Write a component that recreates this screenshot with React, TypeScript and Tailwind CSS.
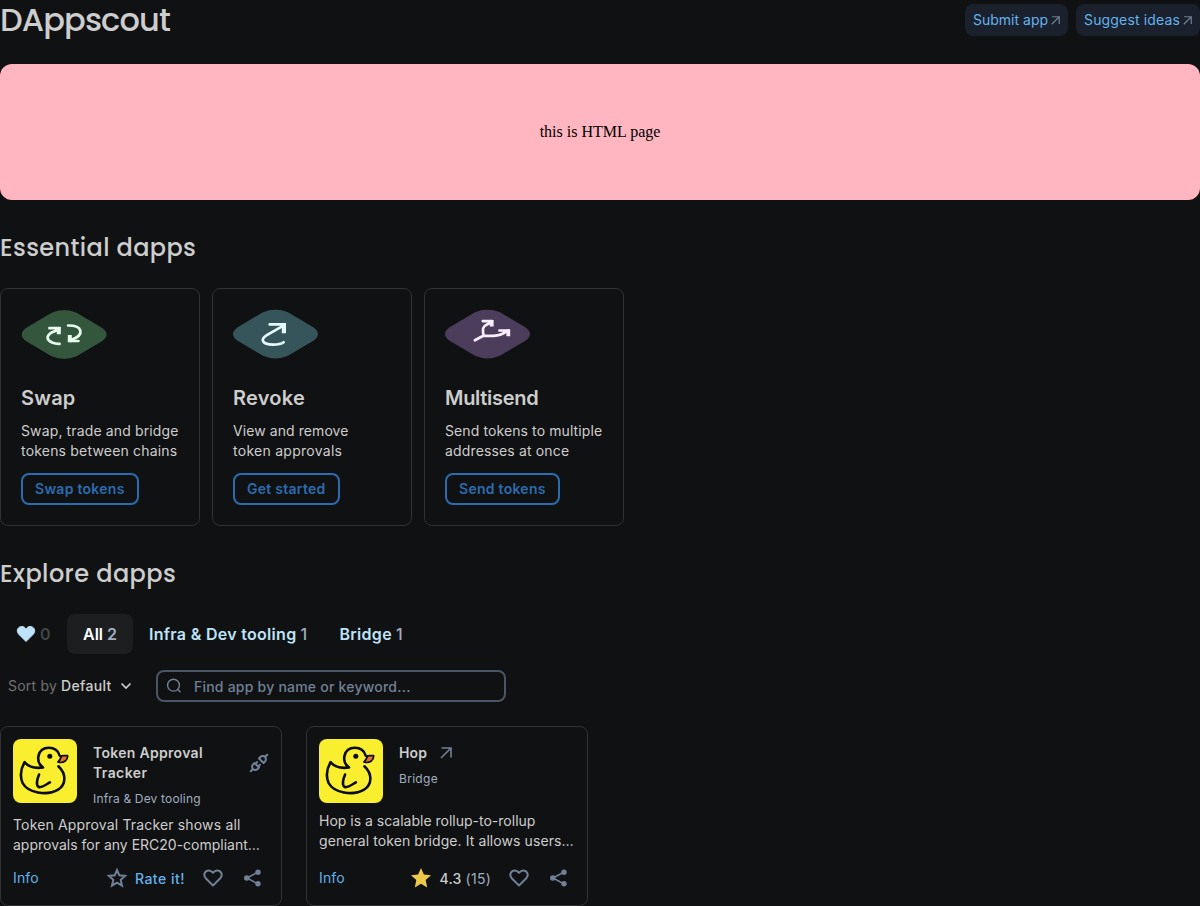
import React from "react";

const heading = "font-[Poppins,Lato,sans-serif] font-medium text-[#cdcdcd]";

type Line = [text: string, tracking: string];

function Lines({ lines }: { lines: Line[] }) {
  return (
    <>
      {lines.map(([text, tracking]) => (
        <span key={text} className={"block whitespace-nowrap " + tracking}>{text}</span>
      ))}
    </>
  );
}

function Arrow({ size, className = "" }: { size: number; className?: string }) {
  return (
    <svg width={size} height={size} viewBox="0 0 12 12" fill="none" stroke="#718096" strokeWidth="1.6" className={"shrink-0 " + className}>
      <path d="M1.500 1H11V10.500M11 1L1 11" />
    </svg>
  );
}

function Badge({ fill, stroke, className = "", children }: { fill: string; stroke: string; className?: string; children: React.ReactNode }) {
  return (
    <svg width="86" height="50" viewBox="0 0 86 50" fill="none" className={"block " + className}>
      <path d="M4.300 18L30 2.700Q42.500 -2.700 55 2.700L80.700 18Q89.300 24.500 80.700 31L55 46.300Q42.500 51.700 30 46.300L4.300 31Q-4.300 24.500 4.300 18Z" fill={fill} />
      <g stroke={stroke} strokeWidth="2.700" strokeLinecap="round" strokeLinejoin="round">{children}</g>
    </svg>
  );
}

const essentials: { title: Line; lines: Line[]; action: string; icon: React.ReactNode }[] = [
  {
    title: ["Swap", "tracking-[0.2px]"],
    lines: [["Swap, trade and bridge", "tracking-[0.13px]"], ["tokens between chains", "tracking-[0.19px]"]],
    action: "Swap tokens",
    icon: (
      <Badge fill="#33563c" stroke="#e9fdee" className="translate-x-[0.6px] translate-y-px">
        <path d="M27.800 18.200H38M37 19.500L33 21.200C27 23 24.500 27 27 30.200C29.300 33 34 33.900 38 33.800" />
        <path strokeWidth="4" strokeLinecap="butt" d="M37.200 17V24.200" />
        <path d="M46.500 15.500C52 15.400 57.500 16.700 58.700 20.500C59.800 24.700 55 28 49 30M48.500 31H56.800" />
        <path strokeWidth="4" strokeLinecap="butt" d="M48.200 25V32.300" />
      </Badge>
    ),
  },
  {
    title: ["Revoke", "tracking-[0.25px]"],
    lines: [["View and remove", "tracking-[0.08px]"], ["token approvals", "tracking-[0.27px]"]],
    action: "Get started",
    icon: (
      <Badge fill="#36555b" stroke="#e6fbff" className="translate-y-[0.5px]">
        <path d="M36.700 14.900H51M50 16.300L33.800 25.600C26.500 30 29.500 35.100 40 35.100C45 35.100 48.500 34.300 50.600 32.700" />
        <path strokeWidth="4.200" strokeLinecap="butt" d="M50.900 13.600V23.800" />
      </Badge>
    ),
  },
  {
    title: ["Multisend", "tracking-[-0.3px]"],
    lines: [["Send tokens to multiple", "tracking-[0.1px]"], ["addresses at once", "tracking-[0.15px]"]],
    action: "Send tokens",
    icon: (
      <Badge fill="#4d3d5c" stroke="#f7eeff" className="translate-y-[0.5px]">
        <path d="M29.900 30.800L38.300 26.300C46 26.500 52 27.200 57.500 24.300L63 21.400M54.400 21H63.500M38.500 26.200C37.700 20 37 17.200 42 14.900L46.800 12.600M37.800 11.600H47" />
        <path strokeWidth="3.800" strokeLinecap="butt" d="M63.300 19.800V26.700M46.700 10.400V17" />
      </Badge>
    ),
  },
];

function Duck() {
  return (
    <svg width="64" height="64" viewBox="0 0 64 64" className="shrink-0 rounded-lg bg-[#f9ef2e]">
      <g transform="translate(0.600 0)" fill="none" stroke="#0b0b08" strokeWidth="2.600" strokeLinecap="round" strokeLinejoin="round">
        <path d="M44.800 27.300C53 35 52.500 45.500 44.500 50.700C33 57.500 14 53.500 9 44C6.500 38 7 30 11 23.200C15 28 22 29.500 29.500 28.500C21.500 23 23.500 9 35.300 8.800C41 8.800 44.500 11.500 46 16.500" />
        <path d="M46.500 17.300C49 16 51.500 16.800 54 16.700C54.500 20.500 50.500 25 44.300 23C46.300 21.500 46.800 20 47.800 17.300Z" fill="#e8722d" strokeWidth="1.700" />
        <path d="M25.500 35.500C23.500 40 22 46.500 25.200 48C28 49 32.500 45.500 36.300 43.300" />
        <circle cx="36.200" cy="17.200" r="2.500" fill="#0b0b08" stroke="none" />
      </g>
    </svg>
  );
}

function Plug() {
  return (
    <svg width="22" height="22" viewBox="0 0 24 24" fill="none" stroke="#718096" strokeWidth="2.200" strokeLinecap="round" strokeLinejoin="round">
      <path d="M7 12l5 5l-1.500 1.500a3.536 3.536 0 1 1 -5 -5zM17 12l-5 -5l1.500 -1.500a3.536 3.536 0 1 1 5 5zM3 21l2.500 -2.500M18.500 5.500l2.500 -2.500M10 11l-2 2M13 14l-2 2" />
    </svg>
  );
}

function Star({ filled }: { filled: boolean }) {
  return (
    <svg width="20" height="20" viewBox="0 0 20 20" fill={filled ? "#ecc94b" : "none"} stroke={filled ? "none" : "#718096"} strokeWidth="2" className="block">
      {filled ? (
        <path d="M10 0L12.900 6.500L20 7.300L14.700 12.100L16.200 19.500L10 15.800L3.800 19.500L5.300 12.100L0 7.300L7.100 6.500Z" />
      ) : (
        <path d="M10 2L12.300 7.300L18 7.900L13.700 11.800L15 17.700L10 14.700L5 17.700L6.300 11.800L2 7.900L7.700 7.300Z" />
      )}
    </svg>
  );
}

const heartPath = "M10 17.500L2.700 10.200C-.4 6.500 2.200 2.500 5.800 2.500C7.700 2.500 9 3.500 10 4.800C11 3.500 12.300 2.500 14.200 2.500C17.800 2.500 20.400 6.500 17.300 10.200Z";

function Heart() {
  return (
    <svg width="20" height="20" viewBox="0 0 20 20" fill="none" stroke="#718096" strokeWidth="2" strokeLinejoin="round">
      <path d={heartPath} />
    </svg>
  );
}

function Share() {
  return (
    <svg width="20" height="20" viewBox="0 0 20 20" fill="#718096" stroke="#718096" strokeWidth="1.500">
      <path d="M5 10L16 4M5 10L16 16" fill="none" />
      <g stroke="none">
        <circle cx="4.800" cy="10" r="2.800" />
        <circle cx="16" cy="4.200" r="2.700" />
        <circle cx="16" cy="15.800" r="2.700" />
      </g>
    </svg>
  );
}

function AppCard({ title, category, lines, external, rating }: { title: Line[]; category: Line; lines: Line[]; external?: boolean; rating?: string }) {
  return (
    <article className="flex h-[180px] w-[282px] flex-col rounded-lg border border-[#313233] p-3">
      <div className="flex">
        <Duck />
        <div className="ml-4 flex-1 pt-1">
          <div className="flex items-center text-sm font-semibold text-[#cdcdcd]">
            <h3><Lines lines={title} /></h3>
            {external && <Arrow size={12} className="ml-[13px]" />}
          </div>
          <p className="mt-2 text-xs text-[#a0aec0]"><Lines lines={[category]} /></p>
        </div>
        {!external && <div className="-mr-px pt-[13px]"><Plug /></div>}
      </div>
      <p className="mt-2 text-sm text-[#cdcdcd]"><Lines lines={lines} /></p>
      <div className="mt-auto flex h-[30px] items-center text-sm">
        <a className="tracking-[0.15px] text-[#63b3ed]">Info</a>
        <div className="ml-auto flex items-center">
          <Star filled={!!rating} />
          {rating ? (
            <span className="ml-2 pt-0.5 font-medium tracking-[0.25px] text-[#cdcdcd]">{rating} <span className="font-normal text-[#a0aec0]">(15)</span></span>
          ) : (
            <span className="ml-2 pt-0.5 font-medium tracking-[0.5px] text-[#63b3ed]">Rate it!</span>
          )}
          <span className="ml-[18px]"><Heart /></span>
          <span className="mr-[7px] ml-[19px]"><Share /></span>
        </div>
      </div>
    </article>
  );
}

const headerLinks: Line[] = [
  ["Submit app", "tracking-normal"],
  ["Suggest ideas", "tracking-[0.15px]"],
];

export default function App() {
  return (
    <div className="h-[906px] w-[1200px] bg-[#101112] font-[Inter,sans-serif] text-[#cdcdcd]">
      <header className="flex h-10 items-center justify-between">
        <h1 className={heading + " text-[32px] leading-10 tracking-[-0.87px]"}>DAppscout</h1>
        <div className="flex gap-2 text-sm text-[#63b3ed]">
          {headerLinks.map(([text, tracking]) => (
            <a key={text} className="flex h-8 items-center rounded-lg bg-[#1a202c] px-2">
              <span className={tracking}>{text}</span>
              <Arrow size={9} className="ml-[3px]" />
            </a>
          ))}
        </div>
      </header>

      <div className="mt-6 flex h-[136px] items-center justify-center rounded-xl bg-[#ffb6c1] font-['Liberation_Serif',serif] text-base text-black">
        this is HTML page
      </div>

      <h2 className={heading + " mt-8 text-2xl leading-8 tracking-[0.38px]"}>Essential dapps</h2>
      <section className="mt-6 flex gap-3">
        {essentials.map((e) => (
          <article key={e.action} className="h-[238px] w-[200px] rounded-lg border border-[#313233] p-5">
            {e.icon}
            <h3 className={"mt-[25px] text-xl leading-7 font-semibold " + e.title[1]}>{e.title[0]}</h3>
            <p className="mt-[9px] text-sm"><Lines lines={e.lines} /></p>
            <button className="mt-3 flex h-8 items-center rounded-lg border-2 border-[#2b6cb0] px-3 text-sm font-semibold tracking-[0.27px] whitespace-nowrap text-[#2b6cb0]">{e.action}</button>
          </article>
        ))}
      </section>

      <h2 className={heading + " mt-8 text-2xl leading-8 tracking-[0.43px]"}>Explore dapps</h2>
      <nav className="mt-6 flex font-semibold text-[#bee3f8]">
        <a className="flex h-10 w-[67px] items-center px-4">
          <svg width="20" height="20" viewBox="0 0 20 20" fill="#bee3f8" className="mr-1"><path d={heartPath} stroke="#bee3f8" strokeLinejoin="round" /></svg>
          <span className="text-[#434445]">0</span>
        </a>
        <a className="flex h-10 w-[66px] items-center rounded-lg bg-[#1d1e1f] px-4 text-white">All<span className="ml-1 text-[#a0aec0]">2</span></a>
        <a className="flex h-10 items-center px-4 tracking-[0.3px]">Infra &amp; Dev tooling<span className="ml-1 font-medium text-[#a0aec0]">1</span></a>
        <a className="flex h-10 items-center px-4 tracking-[0.3px]">Bridge<span className="ml-1 font-medium text-[#a0aec0]">1</span></a>
      </nav>

      <div className="mt-4 flex h-8 items-center text-sm">
        <div className="flex w-[156px] items-center pl-2">
          <span className="tracking-[0.2px] text-[#717172]">Sort by</span>
          <span className="ml-1 font-medium tracking-[0.35px]">Default</span>
          <svg width="12" height="8" viewBox="0 0 12 8" fill="none" stroke="#cdcdcd" strokeWidth="1.700" className="ml-2"><path d="M1.500 1.500L6 6L10.500 1.500" /></svg>
        </div>
        <div className="flex h-8 w-[350px] items-center rounded-lg border-2 border-[#4a5568] pl-2 font-medium text-[#718096]">
          <svg width="16" height="16" viewBox="0 0 16 16" fill="none" stroke="#718096" strokeWidth="1.400"><circle cx="7.500" cy="7.200" r="5.900" /><path d="M11.700 11.500L14.500 14.300" /></svg>
          <span className="ml-3 pt-0.5 tracking-[0.22px]">Find app by name or keyword...</span>
        </div>
      </div>

      <section className="mt-6 flex gap-6">
        <AppCard
          title={[["Token Approval", "tracking-[0.3px]"], ["Tracker", "tracking-[0.4px]"]]}
          category={["Infra & Dev tooling", "tracking-[0.17px]"]}
          lines={[["Token Approval Tracker shows all", "tracking-[0.16px]"], ["approvals for any ERC20-compliant…", "tracking-normal"]]}
        />
        <AppCard
          title={[["Hop", "tracking-[0.1px]"]]}
          category={["Bridge", "tracking-[0.3px]"]}
          lines={[["Hop is a scalable rollup-to-rollup", "tracking-normal"], ["general token bridge. It allows users…", "tracking-[0.08px]"]]}
          external
          rating="4.3"
        />
      </section>
    </div>
  );
}
